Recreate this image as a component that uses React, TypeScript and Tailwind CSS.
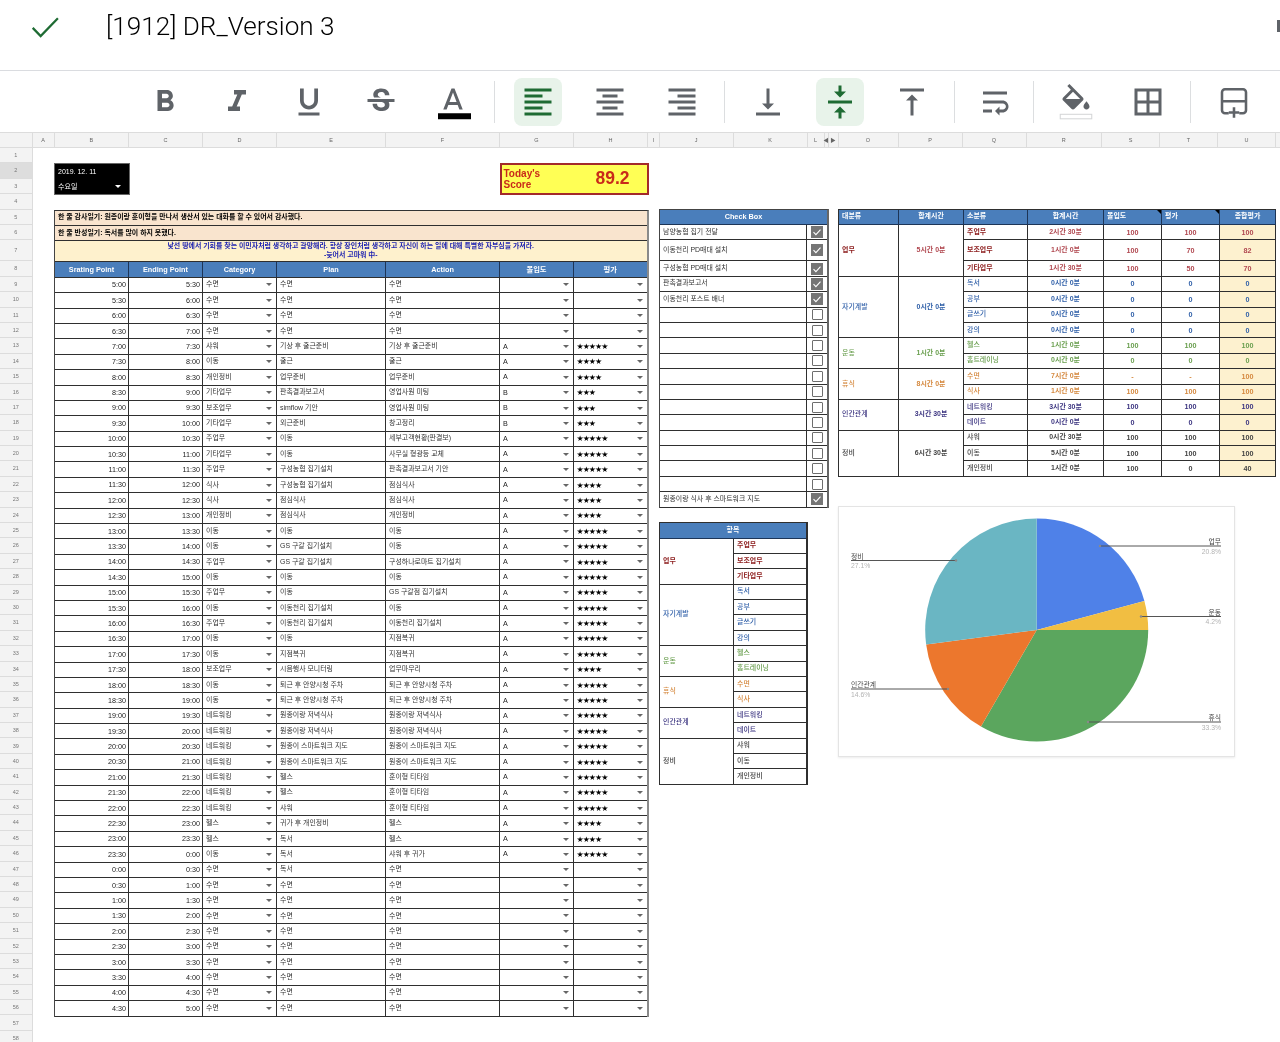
const toolbarGroups = [
  [
    { d: "M15.6 10.79c.97-.67 1.65-1.77 1.65-2.79 0-2.26-1.75-4-4-4H7v14h7.04c2.09 0 3.71-1.7 3.71-3.79 0-1.52-.86-2.82-2.15-3.42zM10 6.5h3c.83 0 1.5.67 1.5 1.5s-.67 1.5-1.5 1.5h-3v-3zm3.5 9H10v-3h3.5c.83 0 1.5.67 1.5 1.5s-.67 1.5-1.5 1.5z" },
    { d: "M10 4v3h2.21l-3.42 8H6v3h8v-3h-2.21l3.42-8H18V4z" },
    { d: "M12 17c3.31 0 6-2.69 6-6V3h-2.5v8c0 1.93-1.57 3.5-3.5 3.5S8.5 12.93 8.5 11V3H6v8c0 3.31 2.69 6 6 6zm-7 2v2h14v-2H5z" },
    { d: "M6.85 7.08C6.85 4.37 9.45 3 12.24 3c1.64 0 3 .49 3.9 1.28.77.65 1.46 1.73 1.46 3.24h-3.01c0-.31-.05-.59-.15-.85-.29-.86-1.2-1.28-2.25-1.28-1.86 0-2.34 1.02-2.34 1.7 0 .48.25.88.74 1.21.38.25.77.48 1.41.7H7.39c-.21-.34-.54-.89-.54-1.92zM21 12v-2H3v2h9.62c1.15.45 1.96.75 1.96 1.97 0 1-.81 1.67-2.28 1.67-1.54 0-2.93-.54-2.93-2.51H6.4c0 .55.08 1.13.24 1.58.81 2.29 3.29 3.3 5.67 3.3 2.27 0 5.3-.89 5.3-4.05 0-.3-.01-1.16-.48-1.94H21V12z" },
    { d: "M11 3L5.5 17h2.25l1.12-3h6.25l1.12 3h2.25L13 3h-2zm-1.38 9L12 5.67 14.38 12H9.62z", bar: "#000000" },
  ],
  [
    { d: "M15 15H3v2h12v-2zm0-8H3v2h12V7zM3 13h18v-2H3v2zm0 8h18v-2H3v2zM3 3v2h18V3H3z", on: true },
    { d: "M7 15v2h10v-2H7zm-4 6h18v-2H3v2zm0-8h18v-2H3v2zm4-6v2h10V7H7zM3 3v2h18V3H3z" },
    { d: "M3 21h18v-2H3v2zm6-4h12v-2H9v2zm-6-4h18v-2H3v2zm6-4h12V7H9v2zM3 3v2h18V3H3z" },
  ],
  [
    { d: "M16 13h-3V3h-2v10H8l4 4 4-4zM4 19v2h16v-2H4z" },
    { d: "M8 19h3v4h2v-4h3l-4-4-4 4zm8-14h-3V1h-2v4H8l4 4 4-4zM4 11v2h16v-2H4z", on: true },
    { d: "M8 11h3v10h2V11h3l-4-4-4 4zM4 3v2h16V3H4z" },
  ],
  [
    { d: "M4 19h6v-2H4v2zM20 5H4v2h16V5zm-3 6H4v2h13.25c1.1 0 2 .9 2 2s-.9 2-2 2H15v-2l-3 3 3 3v-2h2c2.21 0 4-1.79 4-4s-1.79-4-4-4z" },
  ],
  [
    { d: "M16.56 8.94L7.62 0 6.21 1.41l2.38 2.38-5.15 5.15c-.59.59-.59 1.54 0 2.12l5.5 5.5c.29.29.68.44 1.06.44s.77-.15 1.06-.44l5.5-5.5c.59-.58.59-1.53 0-2.12zM5.21 10L10 5.21 14.79 10H5.21zM19 11.5s-2 2.17-2 3.5c0 1.1.9 2 2 2s2-.9 2-2c0-1.33-2-3.5-2-3.5z", bar: "outline" },
    { d: "M3 3v18h18V3H3zm8 16H5v-6h6v6zm0-8H5V5h6v6zm8 8h-6v-6h6v6zm0-8h-6V5h6v6z" },
  ],
  [{ d: "", insert: true }],
];

// spacing either side of each toolbar divider
const dividers = [
  "",
  "ml-[17px] mr-[19px]",
  "ml-[17.5px] mr-[19.5px]",
  "ml-[17.5px] mr-[16px]",
  "ml-[14px] mr-[18.5px]",
  "ml-[17.5px] mr-[19.5px]",
];

const columns = [
  ["A", "w-[22px]"], ["B", "w-[74.5px]"], ["C", "w-[74px]"], ["D", "w-[74px]"], ["E", "w-[109px]"], ["F", "w-[114px]"],
  ["G", "w-[74px]"], ["H", "w-[74px]"], ["I", "w-[11.5px]"], ["J", "w-[74px]"], ["K", "w-[74px]"], ["L", "w-[17px]"],
  ["◀", "w-[4px]"], ["▶", "w-[10px]"], ["O", "w-[60px]"], ["P", "w-[64px]"], ["Q", "w-[64px]"], ["R", "w-[75.5px]"],
  ["S", "w-[58px]"], ["T", "w-[58px]"], ["U", "w-[58px]"], ["V", "w-[14px]"],
];

const times = [
  "5:00", "5:30", "6:00", "6:30", "7:00", "7:30", "8:00", "8:30", "9:00", "9:30", "10:00", "10:30", "11:00", "11:30", "12:00", "12:30",
  "13:00", "13:30", "14:00", "14:30", "15:00", "15:30", "16:00", "16:30", "17:00", "17:30", "18:00", "18:30", "19:00", "19:30", "20:00", "20:30",
  "21:00", "21:30", "22:00", "22:30", "23:00", "23:30", "0:00", "0:30", "1:00", "1:30", "2:00", "2:30", "3:00", "3:30", "4:00", "4:30", "5:00",
];

// category, plan, action, focus, stars
const schedule: [string, string, string, string, number][] = [
  ["수면", "수면", "수면", "", 0],
  ["수면", "수면", "수면", "", 0],
  ["수면", "수면", "수면", "", 0],
  ["수면", "수면", "수면", "", 0],
  ["샤워", "기상 후 출근준비", "기상 후 출근준비", "A", 5],
  ["이동", "출근", "출근", "A", 4],
  ["개인정비", "업무준비", "업무준비", "A", 4],
  ["기타업무", "판촉결과보고서", "영업사원 미팅", "B", 3],
  ["보조업무", "simflow 기안", "영업사원 미팅", "B", 3],
  ["기타업무", "외근준비", "창고정리", "B", 3],
  ["주업무", "이동", "세부고객현황(판결보)", "A", 5],
  ["기타업무", "이동", "사무실 형광등 교체", "A", 5],
  ["주업무", "구성농협 집기설치", "판촉결과보고서 기안", "A", 5],
  ["식사", "구성농협 집기설치", "점심식사", "A", 4],
  ["식사", "점심식사", "점심식사", "A", 4],
  ["개인정비", "점심식사", "개인정비", "A", 4],
  ["이동", "이동", "이동", "A", 5],
  ["이동", "GS 구갈 집기설치", "이동", "A", 5],
  ["주업무", "GS 구갈 집기설치", "구성하나로마트 집기설치", "A", 5],
  ["이동", "이동", "이동", "A", 5],
  ["주업무", "이동", "GS 구갈점 집기설치", "A", 5],
  ["이동", "이동천리 집기설치", "이동", "A", 5],
  ["주업무", "이동천리 집기설치", "이동천리 집기설치", "A", 5],
  ["이동", "이동", "지점복귀", "A", 5],
  ["이동", "지점복귀", "지점복귀", "A", 5],
  ["보조업무", "시음행사 모니터링", "업무마무리", "A", 4],
  ["이동", "퇴근 후 안양시청 주차", "퇴근 후 안양시청 주차", "A", 5],
  ["이동", "퇴근 후 안양시청 주차", "퇴근 후 안양시청 주차", "A", 5],
  ["네트워킹", "원종이랑 저녁식사", "원종이랑 저녁식사", "A", 5],
  ["네트워킹", "원종이랑 저녁식사", "원종이랑 저녁식사", "A", 5],
  ["네트워킹", "원종이 스마트워크 지도", "원종이 스마트워크 지도", "A", 5],
  ["네트워킹", "원종이 스마트워크 지도", "원종이 스마트워크 지도", "A", 5],
  ["네트워킹", "헬스", "훈이형 티타임", "A", 5],
  ["네트워킹", "헬스", "훈이형 티타임", "A", 5],
  ["네트워킹", "샤워", "훈이형 티타임", "A", 5],
  ["헬스", "귀가 후 개인정비", "헬스", "A", 4],
  ["헬스", "독서", "헬스", "A", 4],
  ["이동", "독서", "샤워 후 귀가", "A", 5],
  ["수면", "독서", "수면", "", 0],
  ["수면", "수면", "수면", "", 0],
  ["수면", "수면", "수면", "", 0],
  ["수면", "수면", "수면", "", 0],
  ["수면", "수면", "수면", "", 0],
  ["수면", "수면", "수면", "", 0],
  ["수면", "수면", "수면", "", 0],
  ["수면", "수면", "수면", "", 0],
  ["수면", "수면", "수면", "", 0],
  ["수면", "수면", "수면", "", 0],
];

const checks = [
  { label: "남양농협 집기 전달", done: true },
  { label: "이동천리 PD매대 설치", done: true, tall: true },
  { label: "구성농협 PD매대 설치", done: true },
  { label: "판촉결과보고서", done: true },
  { label: "이동천리 포스트 배너", done: true },
  ...Array.from({ length: 12 }, () => ({ label: "", done: false })),
  { label: "원종이랑 식사 후 스마트워크 지도", done: true },
];

const groups = [
  {
    name: "업무", time: "5시간 0분", head: "text-[#8b1a1a] font-bold", sub: "text-[#8b1a1a] font-bold", num: "text-[#b0474f]",
    rows: [
      ["주업무", "2시간 30분", "100", "100", "100"],
      ["보조업무", "1시간 0분", "100", "70", "82"],
      ["기타업무", "1시간 30분", "100", "50", "70"],
    ],
  },
  {
    name: "자기계발", time: "0시간 0분", head: "text-[#2f5fa8] font-medium", sub: "text-[#2f5fa8] font-medium", num: "text-[#2f5fa8]",
    rows: [
      ["독서", "0시간 0분", "0", "0", "0"],
      ["공부", "0시간 0분", "0", "0", "0"],
      ["글쓰기", "0시간 0분", "0", "0", "0"],
      ["강의", "0시간 0분", "0", "0", "0"],
    ],
  },
  {
    name: "운동", time: "1시간 0분", head: "text-[#6a9f4f] font-medium", sub: "text-[#6a9f4f] font-medium", num: "text-[#6a9f4f]",
    rows: [
      ["헬스", "1시간 0분", "100", "100", "100"],
      ["홈트레이닝", "0시간 0분", "0", "0", "0"],
    ],
  },
  {
    name: "휴식", time: "8시간 0분", head: "text-[#d5893f] font-medium", sub: "text-[#d5893f] font-medium", num: "text-[#d5893f]",
    rows: [
      ["수면", "7시간 0분", "-", "-", "100"],
      ["식사", "1시간 0분", "100", "100", "100"],
    ],
  },
  {
    name: "인간관계", time: "3시간 30분", head: "text-[#3c3580] font-medium", sub: "text-[#3c3580] font-medium", num: "text-[#3c3580]",
    rows: [
      ["네트워킹", "3시간 30분", "100", "100", "100"],
      ["데이트", "0시간 0분", "0", "0", "0"],
    ],
  },
  {
    name: "정비", time: "6시간 30분", head: "text-[#444444] font-medium", sub: "text-[#444444] font-medium", num: "text-[#444444]",
    rows: [
      ["샤워", "0시간 30분", "100", "100", "100"],
      ["이동", "5시간 0분", "100", "100", "100"],
      ["개인정비", "1시간 0분", "100", "0", "40"],
    ],
  },
];

const slices = [
  { pct: 20.83, color: "#4f81e8" },
  { pct: 4.17, color: "#f1be42" },
  { pct: 33.33, color: "#5ba65e" },
  { pct: 14.58, color: "#ec772d" },
  { pct: 27.09, color: "#6ab6c3" },
];

const pieLabels = [
  { name: "업무", pct: "20.8%", y: 39, x1: 261, x2: 382, side: "right" },
  { name: "운동", pct: "4.2%", y: 109.5, x1: 302, x2: 382, side: "right" },
  { name: "휴식", pct: "33.3%", y: 215, x1: 249, x2: 382, side: "right" },
  { name: "정비", pct: "27.1%", y: 53.5, x1: 12, x2: 117, side: "left" },
  { name: "인간관계", pct: "14.6%", y: 182, x1: 12, x2: 109, side: "left" },
];

function ToolButton({ d, on, bar, insert }: { d: string; on?: boolean; bar?: string; insert?: boolean }) {
  const color = on ? "#1e6b33" : "#5f6368";
  return (
    <div className={`flex h-12 w-12 items-center justify-center rounded-lg ${on ? "bg-[#e8f3ea]" : ""}`}>
      <svg viewBox="0 0 24 24" width={36} height={36} fill={color}>
        {insert ? (
          <g fill="none" stroke={color} strokeWidth={1.7}>
            <path d="M8.5 19.5H6a2 2 0 0 1-2-2V5.5a2 2 0 0 1 2-2h12a2 2 0 0 1 2 2v12a2 2 0 0 1-2 2h-2.5" />
            <path d="M4 11.5h16M12 15.5v7M8.5 19h7" />
          </g>
        ) : (
          <path d={d} />
        )}
        {bar === "outline" && <rect x={1.5} y={20.2} width={21} height={3} fill="#fff" stroke="#d5d6d8" strokeWidth={0.7} />}
        {bar && bar !== "outline" && <rect x={2} y={19.5} width={22} height={4} fill={bar} />}
      </svg>
    </div>
  );
}

function Toolbar() {
  return (
    <div className="flex h-[61px] items-center pl-[141px]">
      {toolbarGroups.map((group, i) => (
        <div key={i} className="flex items-center">
          {i > 0 && <div className={`h-[42px] w-px bg-[#dcdee0] ${dividers[i]}`} />}
          <div className="flex gap-6">
            {group.map((icon, j) => (
              <ToolButton key={j} {...icon} />
            ))}
          </div>
        </div>
      ))}
    </div>
  );
}

function Caret({ tone = "border-t-[#666666]" }: { tone?: string }) {
  return <span className={`h-0 w-0 shrink-0 border-x-[3px] border-t-[3px] border-x-transparent ${tone}`} />;
}

function Stars({ count }: { count: number }) {
  return <span className="font-['Noto_Sans_CJK_KR',sans-serif] text-[6.2px] text-black">{"★".repeat(count)}</span>;
}

function SelectCell({ children, last }: { children?: React.ReactNode; last?: boolean }) {
  return (
    <div className={`flex items-center justify-between pl-[3px] pr-[4px] ${last ? "" : "border-r border-[#2f2f2f]"}`}>
      <span className="whitespace-nowrap">{children}</span>
      <Caret />
    </div>
  );
}

function ScheduleTable() {
  const grid = "grid h-[15.4px] grid-cols-[74px_74px_74px_109px_114px_74px_1fr] border-b border-[#2f2f2f]";
  const headers = ["Srating Point", "Ending Point", "Category", "Plan", "Action", "몰입도", "평가"];
  return (
    <div className="border-l border-t border-r-2 border-[#444444] border-t-[#333333] border-r-[#8a8a8a] text-[6.95px] leading-none text-[#333333]">
      <div className="flex h-[15.4px] items-center border-b border-[#2f2f2f] bg-[#f9e4ce] pl-[3px] font-bold text-black">
        한 줄 감사일기: 원종이랑 훈이형을 만나서 생산서 있는 대화를 할 수 있어서 감사했다.
      </div>
      <div className="flex h-[15.4px] items-center border-b border-[#2f2f2f] bg-[#f9e4ce] pl-[3px] font-bold text-black">
        한 줄 반성일기: 독서를 많이 하지 못했다.
      </div>
      <div className="flex h-[21px] flex-col items-center justify-center gap-[2px] border-b border-[#2f2f2f] bg-[#fef1cd] font-bold text-[#1a1fb0]">
        <span>낯선 땅에서 기회를 찾는 이민자처럼 생각하고 갈망해라. 항상 장인처럼 생각하고 자신이 하는 일에 대해 특별한 자부심을 가져라.</span>
        <span>-늦어서 고마워 中-</span>
      </div>
      <div className={`${grid} bg-[#4a7ebb] font-bold text-white`}>
        {headers.map((h) => (
          <div key={h} className="flex items-center justify-center border-r border-[#1d3557] text-[7.3px] last:border-r-0">
            {h}
          </div>
        ))}
      </div>
      {schedule.map(([cat, plan, action, focus, stars], i) => (
        <div key={i} className={grid}>
          <div className="flex items-center justify-end border-r border-[#2f2f2f] pr-[2px] text-[7.2px] text-[#222222]">{times[i]}</div>
          <div className="flex items-center justify-end border-r border-[#2f2f2f] pr-[2px] text-[7.2px] text-[#222222]">{times[i + 1]}</div>
          <SelectCell>{cat}</SelectCell>
          <div className="flex items-center whitespace-nowrap border-r border-[#2f2f2f] pl-[3px]">{plan}</div>
          <div className="flex items-center whitespace-nowrap border-r border-[#2f2f2f] pl-[3px]">{action}</div>
          <SelectCell>
            <span className="text-[7.2px] text-[#222222]">{focus}</span>
          </SelectCell>
          <SelectCell last>{stars > 0 && <Stars count={stars} />}</SelectCell>
        </div>
      ))}
    </div>
  );
}

function CheckTable() {
  return (
    <div className="border-l border-t border-r-2 border-[#444444] border-r-[#666666] text-[6.95px] leading-none text-[#333333]">
      <div className="flex h-[15.4px] items-center justify-center border-b border-[#1d3557] bg-[#4a7ebb] text-[7.3px] font-bold text-white">
        Check Box
      </div>
      {checks.map((row, i) => (
        <div key={i} className={`grid grid-cols-[147px_1fr] border-b border-[#2f2f2f] ${row.tall ? "h-[21px]" : "h-[15.4px]"}`}>
          <div className="flex items-center whitespace-nowrap border-r border-[#2f2f2f] pl-[3px]">{row.label}</div>
          <div className="flex items-center justify-center">
            {row.done ? (
              <svg viewBox="0 0 12 12" width={12} height={12}>
                <rect width={12} height={12} fill="#757575" />
                <path d="M2.5 6.2l2.4 2.4 4.6-5" fill="none" stroke="#fff" strokeWidth={1.1} />
              </svg>
            ) : (
              <div className="h-[11px] w-[11px] rounded-[1px] border border-[#6e6e6e]" />
            )}
          </div>
        </div>
      ))}
    </div>
  );
}

function ItemTable() {
  return (
    <div className="w-[149px] border-l border-t border-r-2 border-[#2f2f2f] text-[6.95px] leading-none">
      <div className="flex h-[15.4px] items-center justify-center border-b border-[#1d3557] bg-[#4a7ebb] font-bold text-white">항목</div>
      {groups.map((g) => (
        <div key={g.name} className="grid grid-cols-[74px_1fr] border-b border-[#2f2f2f]">
          <div className={`flex items-center border-r border-[#2f2f2f] pl-[3px] ${g.head}`}>{g.name}</div>
          <div>
            {g.rows.map(([label]) => (
              <div key={label} className={`flex h-[15.4px] items-center border-b border-[#2f2f2f] pl-[3px] last:h-[14.4px] last:border-b-0 ${g.sub}`}>
                {label}
              </div>
            ))}
          </div>
        </div>
      ))}
    </div>
  );
}

function SummaryTable() {
  const heads = [
    { label: "대분류", cls: "justify-start pl-[3px]" },
    { label: "합계시간", cls: "justify-center" },
    { label: "소분류", cls: "justify-start pl-[3px]" },
    { label: "합계시간", cls: "justify-center" },
    { label: "몰입도", cls: "justify-start pl-[3px]", note: true },
    { label: "평가", cls: "justify-start pl-[3px]", note: true },
    { label: "종합평가", cls: "justify-center" },
  ];
  return (
    <div className="w-[438px] border-l border-t border-[#2f2f2f] text-[6.95px] leading-none">
      <div className="grid h-[15.4px] grid-cols-[60px_65px_64px_76px_58px_58px_1fr] border-b border-[#1d3557] bg-[#4a7ebb] font-bold text-white">
        {heads.map((h, i) => (
          <div key={i} className={`relative flex items-center border-r border-[#1d3557] ${h.cls}`}>
            {h.label}
            {h.note && <span className="absolute right-0 top-0 h-0 w-0 border-l-[4px] border-t-[4px] border-l-transparent border-t-black" />}
          </div>
        ))}
      </div>
      {groups.map((g) => (
        <div key={g.name} className="grid grid-cols-[60px_65px_1fr] border-b border-[#2f2f2f]">
          <div className={`flex items-center border-r border-[#2f2f2f] pl-[3px] ${g.head}`}>{g.name}</div>
          <div className={`flex items-center justify-center border-r border-[#2f2f2f] font-bold ${g.num}`}>{g.time}</div>
          <div>
            {g.rows.map(([label, time, focus, score, total], i) => {
              const lastRow = i === g.rows.length - 1;
              const height = g.name === "업무" && i === 1 ? "h-[21px]" : lastRow ? "h-[14.4px]" : "h-[15.4px]";
              return (
                <div key={label} className={`grid grid-cols-[64px_76px_58px_58px_1fr] border-[#2f2f2f] ${height} ${lastRow ? "" : "border-b"}`}>
                  <div className={`flex items-center border-r border-[#2f2f2f] pl-[3px] ${g.sub}`}>{label}</div>
                  <div className={`flex items-center justify-center border-r border-[#2f2f2f] font-bold ${g.num}`}>{time}</div>
                  <div className={`flex items-center justify-center border-r border-[#2f2f2f] text-[7.2px] font-bold ${g.num}`}>{focus}</div>
                  <div className={`flex items-center justify-center border-r border-[#2f2f2f] text-[7.2px] font-bold ${g.num}`}>{score}</div>
                  <div className={`flex items-center justify-center border-r border-[#2f2f2f] bg-[#fdf1cf] text-[7.2px] font-bold ${g.num}`}>{total}</div>
                </div>
              );
            })}
          </div>
        </div>
      ))}
    </div>
  );
}

function PieChart() {
  const cx = 197.7;
  const cy = 123;
  const r = 111.5;
  let acc = 0;
  const paths = slices.map((s) => {
    const a0 = (acc / 100) * 2 * Math.PI;
    acc += s.pct;
    const a1 = (acc / 100) * 2 * Math.PI;
    const x0 = cx + r * Math.sin(a0);
    const y0 = cy - r * Math.cos(a0);
    const x1 = cx + r * Math.sin(a1);
    const y1 = cy - r * Math.cos(a1);
    const large = s.pct > 50 ? 1 : 0;
    return { d: `M${cx} ${cy}L${x0} ${y0}A${r} ${r} 0 ${large} 1 ${x1} ${y1}Z`, color: s.color };
  });
  return (
    <div className="mt-[29.5px] h-[251px] w-[397px] border border-[#e4e4e4] bg-white shadow-[0_1px_2px_rgba(0,0,0,0.08)]">
      <svg viewBox="0 0 395 249" width={395} height={249} className="font-['Liberation_Sans','Noto_Sans_CJK_KR',sans-serif]">
        {paths.map((p) => (
          <path key={p.color} d={p.d} fill={p.color} />
        ))}
        {pieLabels.map((l) => {
          const right = l.side === "right";
          const tx = right ? l.x2 : l.x1;
          const anchor = right ? "end" : "start";
          return (
            <g key={l.name}>
              <line x1={l.x1} x2={l.x2} y1={l.y} y2={l.y} stroke="#555555" strokeWidth={1} />
              <circle cx={right ? l.x1 : l.x2} cy={l.y} r={1.2} fill="#8a8a8a" />
              <text x={tx} y={l.y - 2} textAnchor={anchor} fontSize={6.8} fill="#444444">
                {l.name}
              </text>
              <text x={tx} y={l.y + 7.5} textAnchor={anchor} fontSize={6.8} fill="#b3b3b3">
                {l.pct}
              </text>
            </g>
          );
        })}
      </svg>
    </div>
  );
}

function RowNumbers() {
  return (
    <div className="w-[32.5px] shrink-0 text-[5.5px] text-[#777777]">
      {Array.from({ length: 58 }, (_, i) => i + 1).map((n) => (
        <div
          key={n}
          className={`flex items-center justify-center border-b border-r border-[#dcdcdc] ${n === 7 ? "h-[21px]" : "h-[15.4px]"} ${n === 2 ? "bg-[#dddddd]" : "bg-[#f3f3f3]"}`}
        >
          {n}
        </div>
      ))}
    </div>
  );
}

export default function App() {
  return (
    <div className="h-[1042px] w-[1280px] overflow-hidden bg-white font-['Liberation_Sans','Noto_Sans_CJK_KR',sans-serif] blur-[0.3px]">
      <div className="flex h-[71px] items-start border-b border-[#dadce0] pl-[27px]">
        <svg viewBox="0 0 24 24" width={36} height={36} fill="none" stroke="#1e6b33" strokeWidth={1.5} className="mt-[9px]">
          <path d="M3.8 12.6l5.3 5.5L20.6 6.2" />
        </svg>
        <div className="ml-[43px] mt-[13px] font-['Roboto',sans-serif] text-[26.1px] font-light leading-none text-black">[1912] DR_Version 3</div>
        <div className="ml-auto mt-[20px] h-[12px] w-[3px] bg-[#5f6368]" />
      </div>

      <Toolbar />

      <div className="flex h-[16px] border-y border-[#dcdcdc] bg-[#f3f3f3] text-[5.5px] text-[#666666]">
        <div className="w-[32.5px] shrink-0 border-r border-[#dcdcdc]" />
        {columns.map(([label, w]) => (
          <div key={label} className={`flex shrink-0 items-center justify-center border-r border-[#dcdcdc] ${w}`}>
            {label}
          </div>
        ))}
      </div>

      <div className="flex">
        <RowNumbers />
        <div className="w-[21.5px] shrink-0" />
        <div className="w-[594.5px] shrink-0">
          <div className="flex h-[61.6px] items-start justify-between pt-[14.5px]">
            <div className="flex h-[32px] w-[76px] flex-col justify-around border border-[#666666] bg-black pl-[3px] pr-[8px] text-[7px] leading-none text-white">
              <span>2019. 12. 11</span>
              <span className="flex items-center justify-between">
                수요일
                <Caret tone="border-t-white" />
              </span>
            </div>
            <div className="grid h-[32px] w-[149px] grid-cols-[75px_1fr] items-center border-2 border-[#a32a2a] bg-[#ffff55] pl-[2px] font-bold text-[#c92a1a]">
              <span className="text-[10px] leading-[11px]">
                Today's
                <br />
                Score
              </span>
              <span className="text-center text-[17.5px] leading-none">89.2</span>
            </div>
          </div>
          <ScheduleTable />
        </div>
        <div className="ml-[10.5px] w-[170px] shrink-0 pt-[60.6px]">
          <CheckTable />
          <div className="mt-[14.5px]">
            <ItemTable />
          </div>
        </div>
        <div className="ml-[9px] shrink-0 pt-[60.6px]">
          <SummaryTable />
          <PieChart />
        </div>
      </div>
    </div>
  );
}
